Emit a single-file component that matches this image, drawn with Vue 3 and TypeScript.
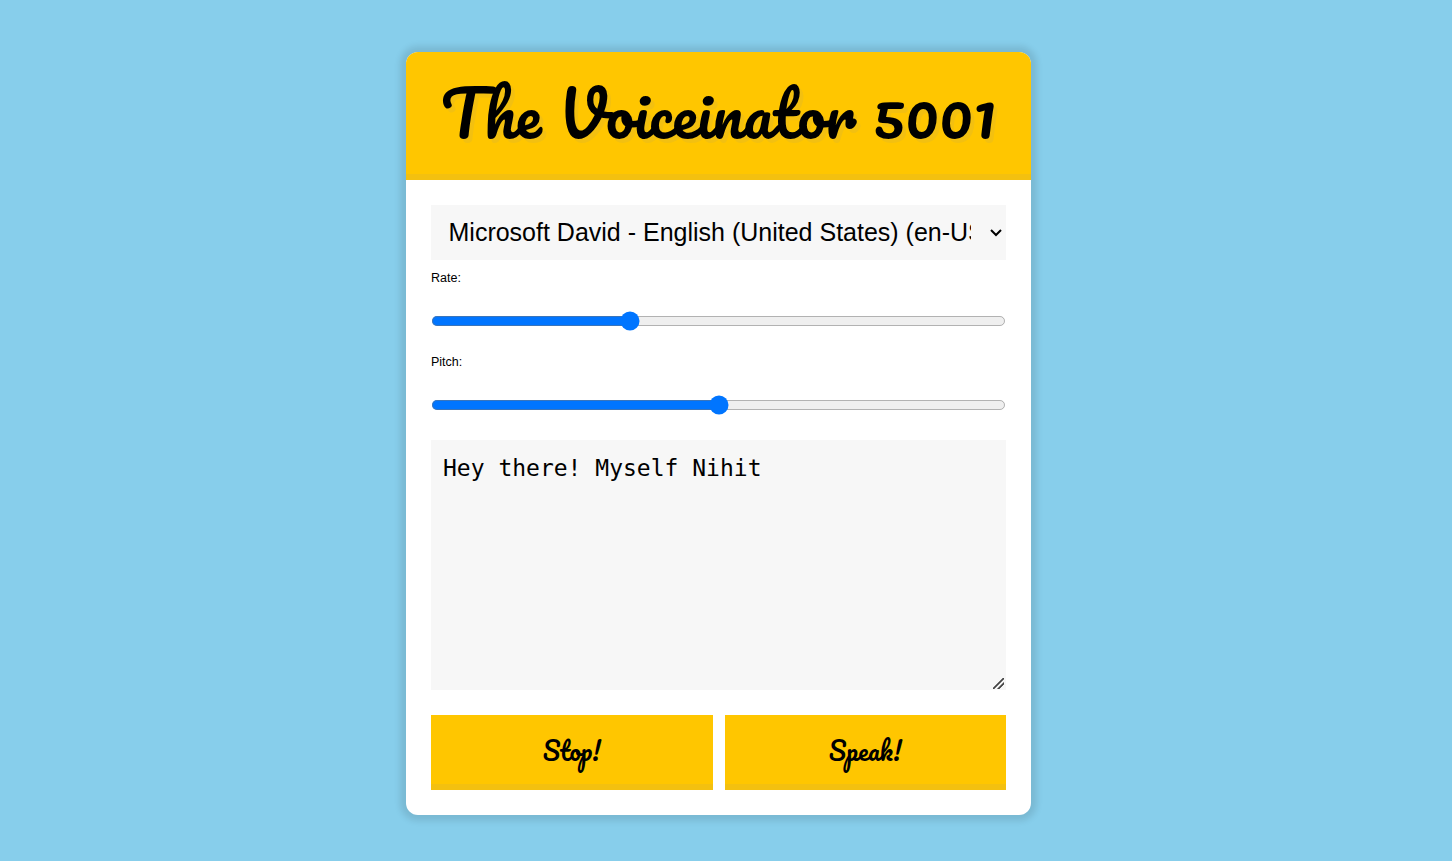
<script setup lang="ts">
import { ref } from 'vue'

const voices: string[] = [
  'Microsoft David - English (United States) (en-US)',
  'Microsoft Mark - English (United States) (en-US)',
  'Microsoft Zira - English (United States) (en-US)',
]

const voice = ref<string>(voices[0])
const rate = ref<number>(1.02)
const pitch = ref<number>(1)
const message = ref<string>('Hey there! Myself Nihit')

function stop(): void {
  window.speechSynthesis?.cancel()
}

function speak(): void {
  stop()
  const utterance = new SpeechSynthesisUtterance(message.value)
  utterance.rate = Number(rate.value)
  utterance.pitch = Number(pitch.value)
  window.speechSynthesis?.speak(utterance)
}
</script>

<template>
  <main class="page">
    <form class="card" @submit.prevent="speak">
      <header class="card-header">
        <h1>The Voiceinator 5001</h1>
      </header>

      <div class="card-body">
        <select v-model="voice" class="voice" name="voice" aria-label="Voice">
          <option v-for="name in voices" :key="name" :value="name">{{ name }}</option>
        </select>

        <div class="field">
          <label for="rate">Rate:</label>
          <input id="rate" v-model="rate" type="range" name="rate" min="0" max="3" step="any" />
        </div>

        <div class="field">
          <label for="pitch">Pitch:</label>
          <input id="pitch" v-model="pitch" type="range" name="pitch" min="0" max="2" step="0.1" />
        </div>

        <textarea v-model="message" class="message" name="text" aria-label="Text to speak" spellcheck="false"></textarea>

        <div class="actions">
          <button type="button" @click="stop">Stop!</button>
          <button type="submit">Speak!</button>
        </div>
      </div>
    </form>
  </main>
</template>

<style>
body {
  margin: 0;
  background: #87ceeb;
}
</style>

<style scoped>
.page {
  box-sizing: border-box;
  min-height: 100vh;
  padding: 52px 15px 46px 0;
  display: flex;
  justify-content: center;
  align-items: flex-start;
  background: #87ceeb;
  font-family: "Liberation Sans", Arial, sans-serif;
  color: #000;
}

.card {
  width: 100%;
  max-width: 625px;
  border-radius: 12px;
  overflow: hidden;
  background: #fff;
  box-shadow: 0 0 6px 6px rgba(0, 0, 0, 0.1);
}

.card-header {
  padding: 16px 24px;
  border-bottom: 6px solid #f3c010;
  background: #ffc600;
}

h1 {
  margin: 0;
  zoom: 1.25;
  font-family: Pacifico, cursive;
  font-size: 50px;
  line-height: 72px;
  font-weight: 400;
  text-align: center;
  white-space: nowrap;
  text-shadow: 3px 3px 0 #f3c010;
}

.card-body {
  padding: 25px;
}

.voice {
  display: block;
  box-sizing: border-box;
  zoom: 1.25;
  width: 100%;
  height: 44px;
  padding: 9px 12px 10px 10px;
  border: 0;
  border-radius: 0;
  background: #f7f7f7;
  color: #000;
  font-family: inherit;
  font-size: 20px;
}

.field {
  padding: 11px 0 13px;
}

.field label {
  display: block;
  zoom: 1.25;
  margin-bottom: 20px;
  font-size: 10px;
  line-height: 12px;
}

.field input {
  display: block;
  zoom: 1.25;
  width: 100%;
  height: 16px;
  margin: 0;
}

.message {
  display: block;
  box-sizing: border-box;
  width: 100%;
  height: 250px;
  margin: 12px 0 25px;
  padding: 13px 12px;
  border: 0;
  border-radius: 0;
  background: #f7f7f7;
  color: #000;
  font-family: Consolas, "DejaVu Sans Mono", monospace;
  font-size: 23px;
  line-height: 30px;
}

.message::-webkit-resizer {
  background: linear-gradient(
      135deg,
      transparent 44%,
      #444 46% 54%,
      transparent 56% 67%,
      #444 69% 77%,
      transparent 79%
    )
    2px 3px / 11px 11px no-repeat;
}

.actions {
  display: grid;
  grid-template-columns: 1fr 1fr;
  gap: 12px;
}

button {
  height: 75px;
  padding: 0 12px;
  border: 0;
  border-bottom: 6px solid #f3c010;
  background: #ffc600;
  color: #000;
  font-family: Pacifico, cursive;
  font-size: 25px;
  font-weight: 400;
  cursor: pointer;
}
</style>
